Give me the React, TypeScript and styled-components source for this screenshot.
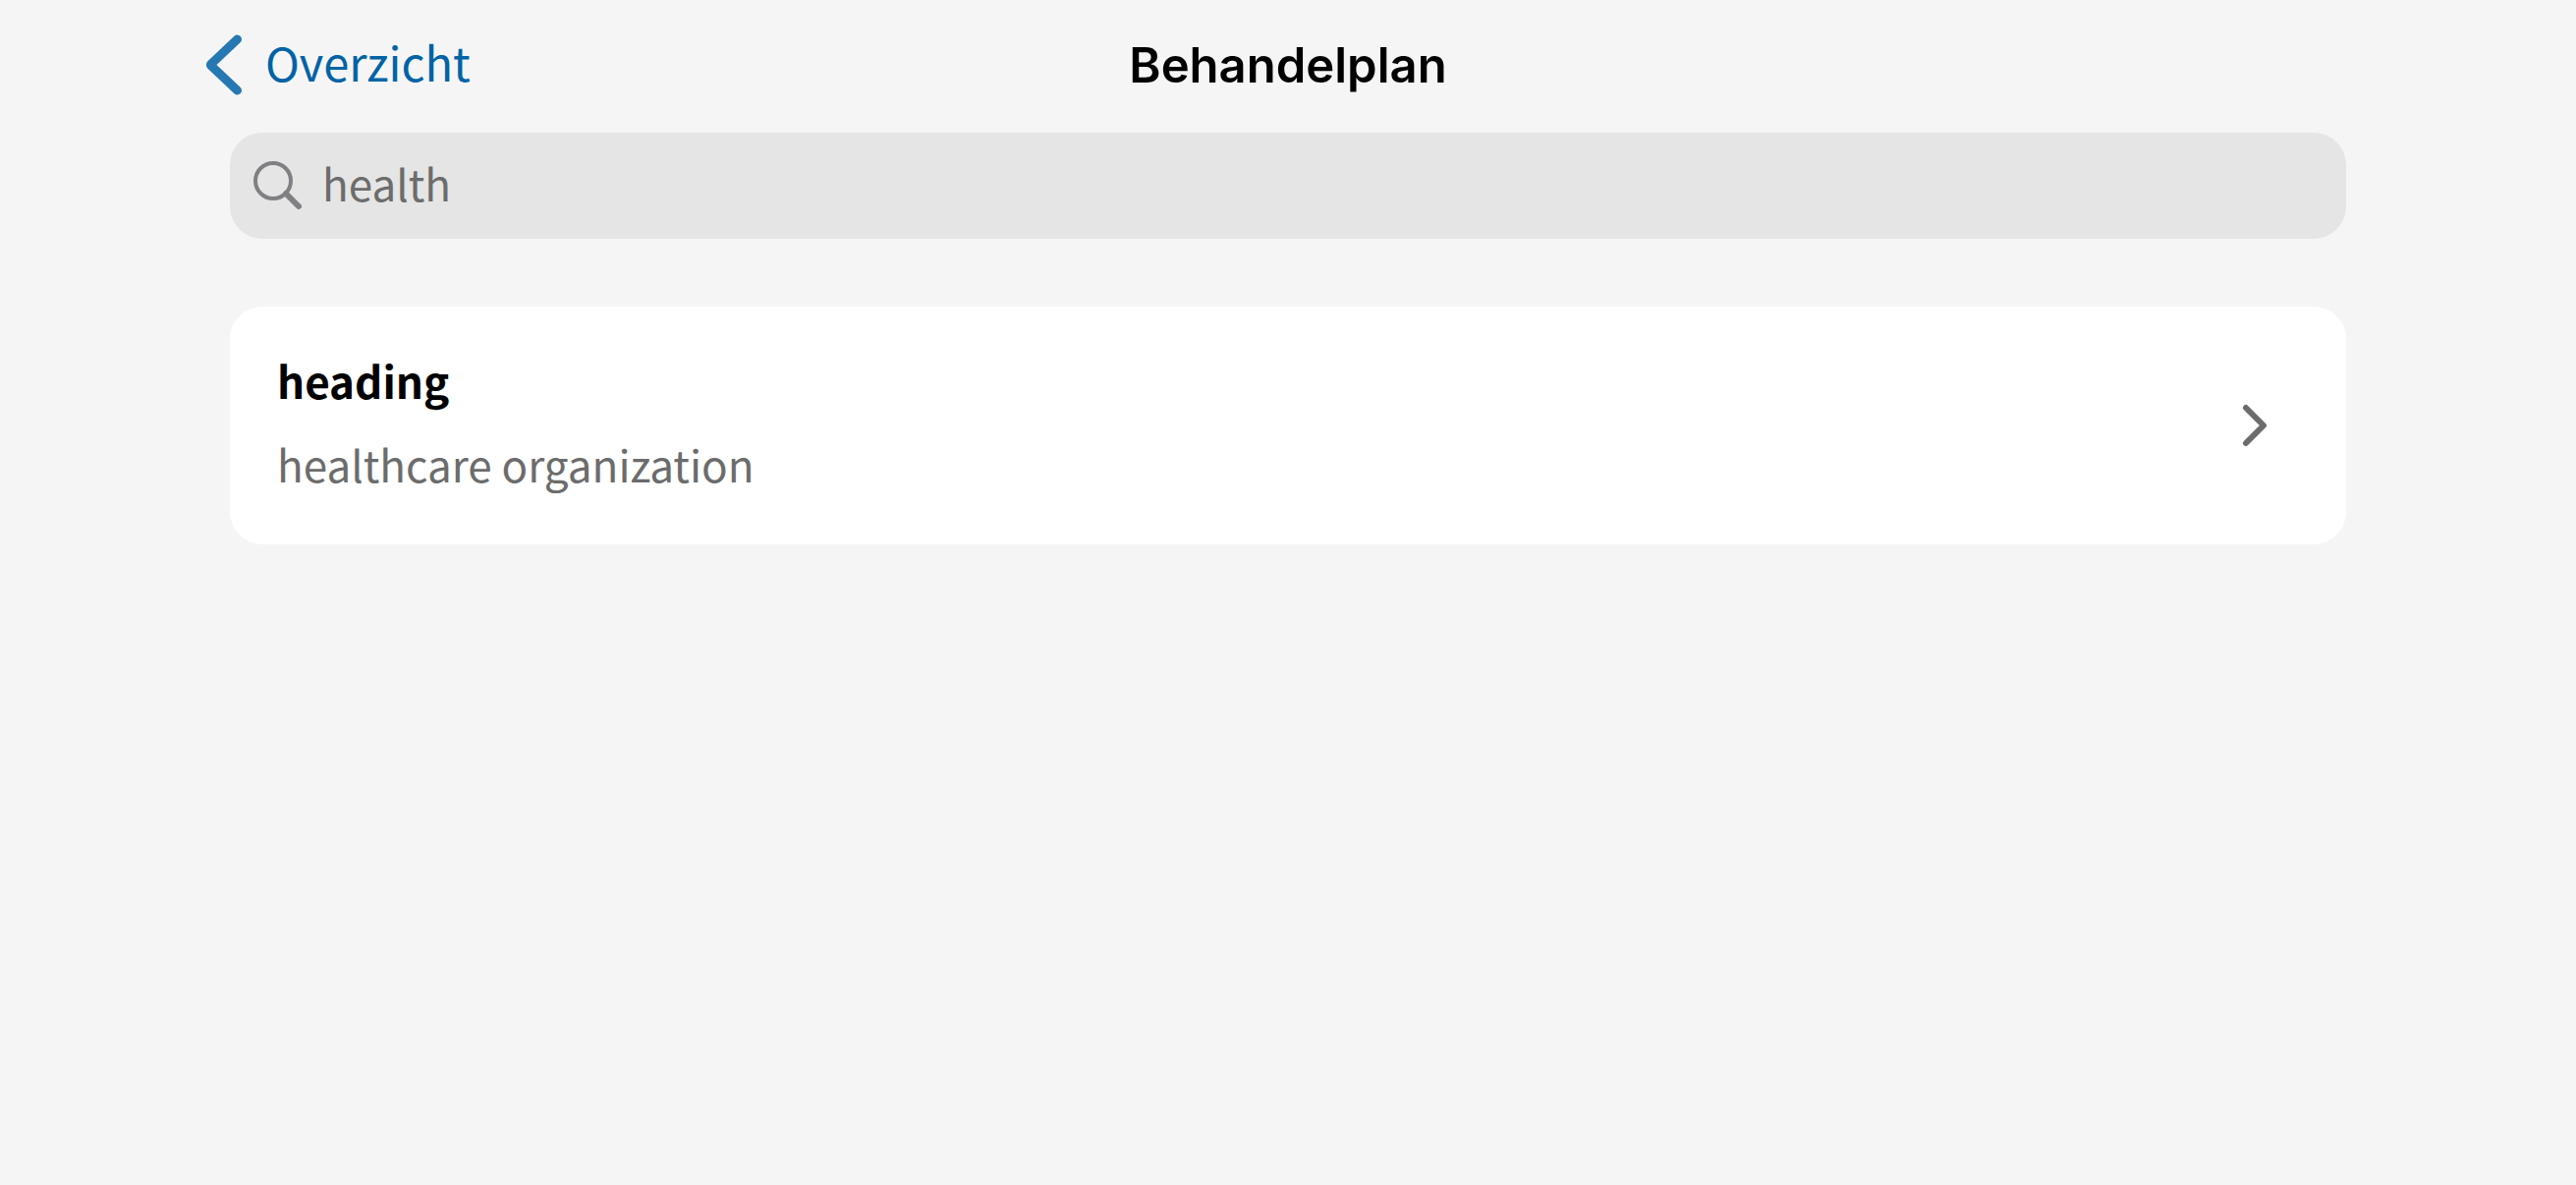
import React, { useState } from "react";
import styled, { createGlobalStyle } from "styled-components";

const humanist = '"Noto Sans CJK SC", "Noto Sans", sans-serif';

const GlobalStyle = createGlobalStyle`
  *, *::before, *::after {
    box-sizing: border-box;
  }
  body {
    margin: 0;
    background: #f5f5f5;
    font-family: ${humanist};
  }
`;

const Header = styled.header`
  display: grid;
  grid-template-columns: 1fr auto 1fr;
  align-items: start;
  padding: 36px 209px 37px;
`;

const BackLink = styled.a`
  display: flex;
  align-items: center;
  justify-self: start;
  gap: 23px;
  height: 60px;
  color: #0063a5;
  text-decoration: none;
`;

const BackLabel = styled.span`
  padding-bottom: 6px;
  font-size: 47px;
  line-height: 60px;
`;

const BackIcon = styled.svg`
  width: 38px;
  height: 62px;
  stroke: #2678b3;
`;

const Title = styled.h1`
  margin: 0;
  color: #000;
  font-family: Inter, "Liberation Sans", sans-serif;
  font-size: 49px;
  font-weight: 600;
  line-height: 62px;
`;

const Content = styled.main`
  display: flex;
  flex-direction: column;
  gap: 69px;
  padding: 0 234px;
`;

const SearchBar = styled.label`
  display: flex;
  align-items: center;
  gap: 21px;
  padding: 24px;
  border-radius: 33px;
  background: #e5e5e5;
`;

const SearchIcon = styled.svg`
  flex: none;
  width: 49px;
  height: 50px;
  stroke: #808084;
`;

const SearchInput = styled.input`
  flex: 1;
  min-width: 0;
  height: 60px;
  padding: 0 0 6px;
  border: 0;
  outline: 0;
  background: transparent;
  color: #6c6c6c;
  font-family: ${humanist};
  font-size: 44px;
`;

const Results = styled.ul`
  margin: 0;
  padding: 0;
  list-style: none;
`;

const ResultCard = styled.button`
  display: flex;
  align-items: center;
  justify-content: space-between;
  width: 100%;
  padding: 0 80px 0 48px;
  border: 0;
  border-radius: 33px;
  background: #fff;
  font-family: ${humanist};
  text-align: left;
  cursor: pointer;
`;

const ResultText = styled.span`
  display: flex;
  flex-direction: column;
  gap: 25px;
  padding: 45px 0 52px;
`;

const ResultTitle = styled.span`
  color: #000;
  font-size: 44px;
  font-weight: 700;
  line-height: 60px;
`;

const ResultSubtitle = styled.span`
  color: #6c6c6c;
  font-size: 44px;
  line-height: 60px;
`;

const ChevronIcon = styled.svg`
  flex: none;
  width: 26px;
  height: 44px;
  stroke: #6c6c6c;
`;

const results = [{ title: "heading", subtitle: "healthcare organization" }];

export default function App() {
  const [query, setQuery] = useState("health");

  return (
    <>
      <GlobalStyle />
      <Header>
        <BackLink href="#overzicht">
          <BackIcon viewBox="0 0 38 62" fill="none" strokeWidth="9" strokeLinecap="round" strokeLinejoin="round" aria-hidden="true">
            <path d="M32.5 5 5.5 30.5v1L32.5 57" />
          </BackIcon>
          <BackLabel>Overzicht</BackLabel>
        </BackLink>
        <Title>Behandelplan</Title>
      </Header>
      <Content>
        <SearchBar>
          <SearchIcon viewBox="0 0 49 50" fill="none" strokeLinecap="round" aria-hidden="true">
            <circle cx="20" cy="20" r="18" strokeWidth="4" />
            <path d="M33 33 46 46" strokeWidth="6" />
          </SearchIcon>
          <SearchInput
            type="text"
            aria-label="Zoeken"
            value={query}
            onChange={(event) => setQuery(event.target.value)}
          />
        </SearchBar>
        <Results>
          {results.map((result) => (
            <li key={result.title}>
              <ResultCard type="button">
                <ResultText>
                  <ResultTitle>{result.title}</ResultTitle>
                  <ResultSubtitle>{result.subtitle}</ResultSubtitle>
                </ResultText>
                <ChevronIcon viewBox="0 0 26 44" fill="none" strokeWidth="6" strokeLinecap="round" strokeLinejoin="round" aria-hidden="true">
                  <path d="M4 4 22 22 4 40" />
                </ChevronIcon>
              </ResultCard>
            </li>
          ))}
        </Results>
      </Content>
    </>
  );
}
